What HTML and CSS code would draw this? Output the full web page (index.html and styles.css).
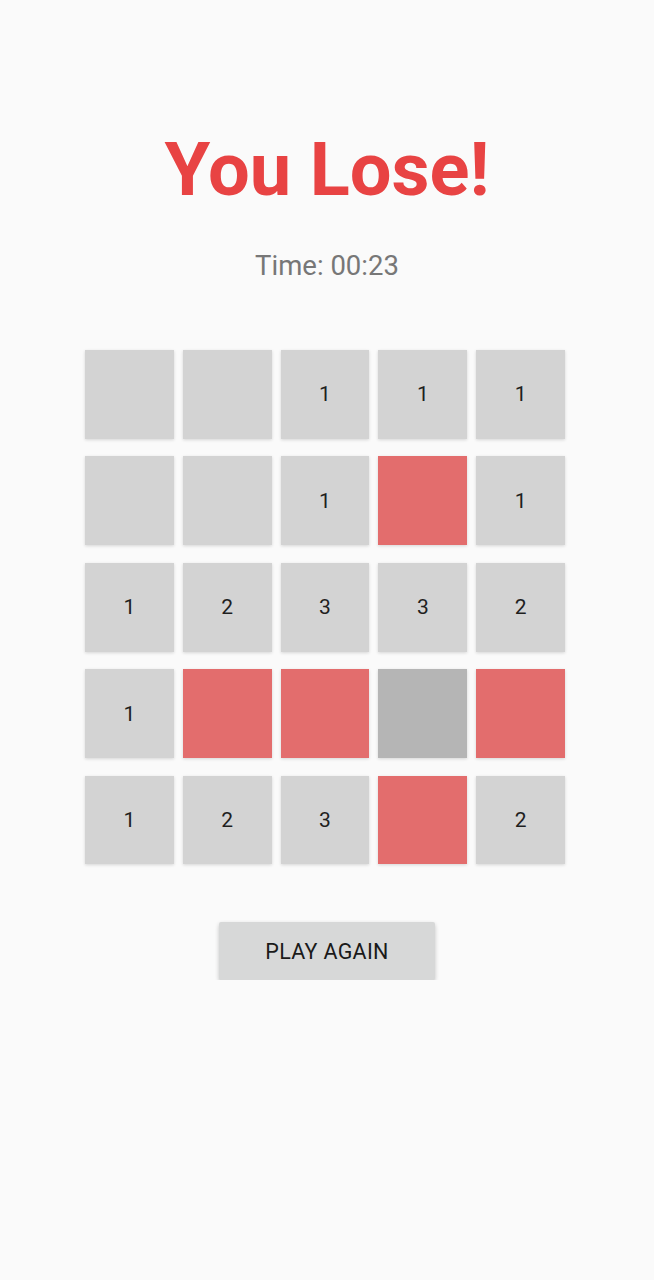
FILE: index.html
```html
<!DOCTYPE html>
<html lang="en">
  <head>
    <meta charset="UTF-8" />
    <meta name="viewport" content="width=device-width, initial-scale=1.0" />
    <title>Minesweeper</title>
    <link rel="stylesheet" href="styles.css">
  </head>
  <body>
    <div class="screen">
      <h1 class="result-title">You Lose!</h1>
      <p class="timer">Time: 00:23</p>

      <div class="board">
        <div class="cell"></div>
        <div class="cell"></div>
        <div class="cell">1</div>
        <div class="cell">1</div>
        <div class="cell">1</div>

        <div class="cell"></div>
        <div class="cell"></div>
        <div class="cell">1</div>
        <div class="cell mine"></div>
        <div class="cell">1</div>

        <div class="cell">1</div>
        <div class="cell">2</div>
        <div class="cell">3</div>
        <div class="cell">3</div>
        <div class="cell">2</div>

        <div class="cell">1</div>
        <div class="cell mine"></div>
        <div class="cell mine"></div>
        <div class="cell hidden"></div>
        <div class="cell mine"></div>

        <div class="cell">1</div>
        <div class="cell">2</div>
        <div class="cell">3</div>
        <div class="cell mine"></div>
        <div class="cell">2</div>
      </div>

      <button class="button">PLAY AGAIN</button>
    </div>
  </body>
</html>
```

FILE: styles.css
```css
body {
  margin: 0;
  font-family: Roboto, "Noto Sans", Arial, sans-serif;
  background-color: #fafafa;
}
.screen {
  display: flex;
  flex-direction: column;
  align-items: center;
  padding-top: 126px;
}
.result-title {
  margin: 0;
  font-size: 74px;
  line-height: 88px;
  font-weight: 700;
  color: #e84343;
}
.timer {
  margin: 36px 0 0;
  font-size: 27.5px;
  line-height: 32px;
  color: #777777;
}
.board {
  display: grid;
  grid-template-columns: repeat(5, 88.8px);
  grid-auto-rows: 88.8px;
  column-gap: 9px;
  row-gap: 17.6px;
  margin: 68px 4px 0 0;
}
.cell {
  display: flex;
  align-items: center;
  justify-content: center;
  background-color: #d3d3d3;
  box-shadow: 0 1px 3px rgba(0, 0, 0, 0.15);
  font-size: 21px;
  color: #1f1f1f;
}
.cell.mine {
  background-color: #e36d6d;
}
.cell.hidden {
  background-color: #b5b5b5;
}
.button {
  margin-top: 58px;
  width: 216px;
  height: 58px;
  border: none;
  border-radius: 2px;
  background-color: #d7d8d8;
  box-shadow: 0 2px 4px rgba(0, 0, 0, 0.22);
  font-family: Roboto, "Noto Sans", Arial, sans-serif;
  font-size: 21.5px;
  font-weight: 400;
  letter-spacing: 0.3px;
  color: #1a1a1a;
  cursor: pointer;
}
```
